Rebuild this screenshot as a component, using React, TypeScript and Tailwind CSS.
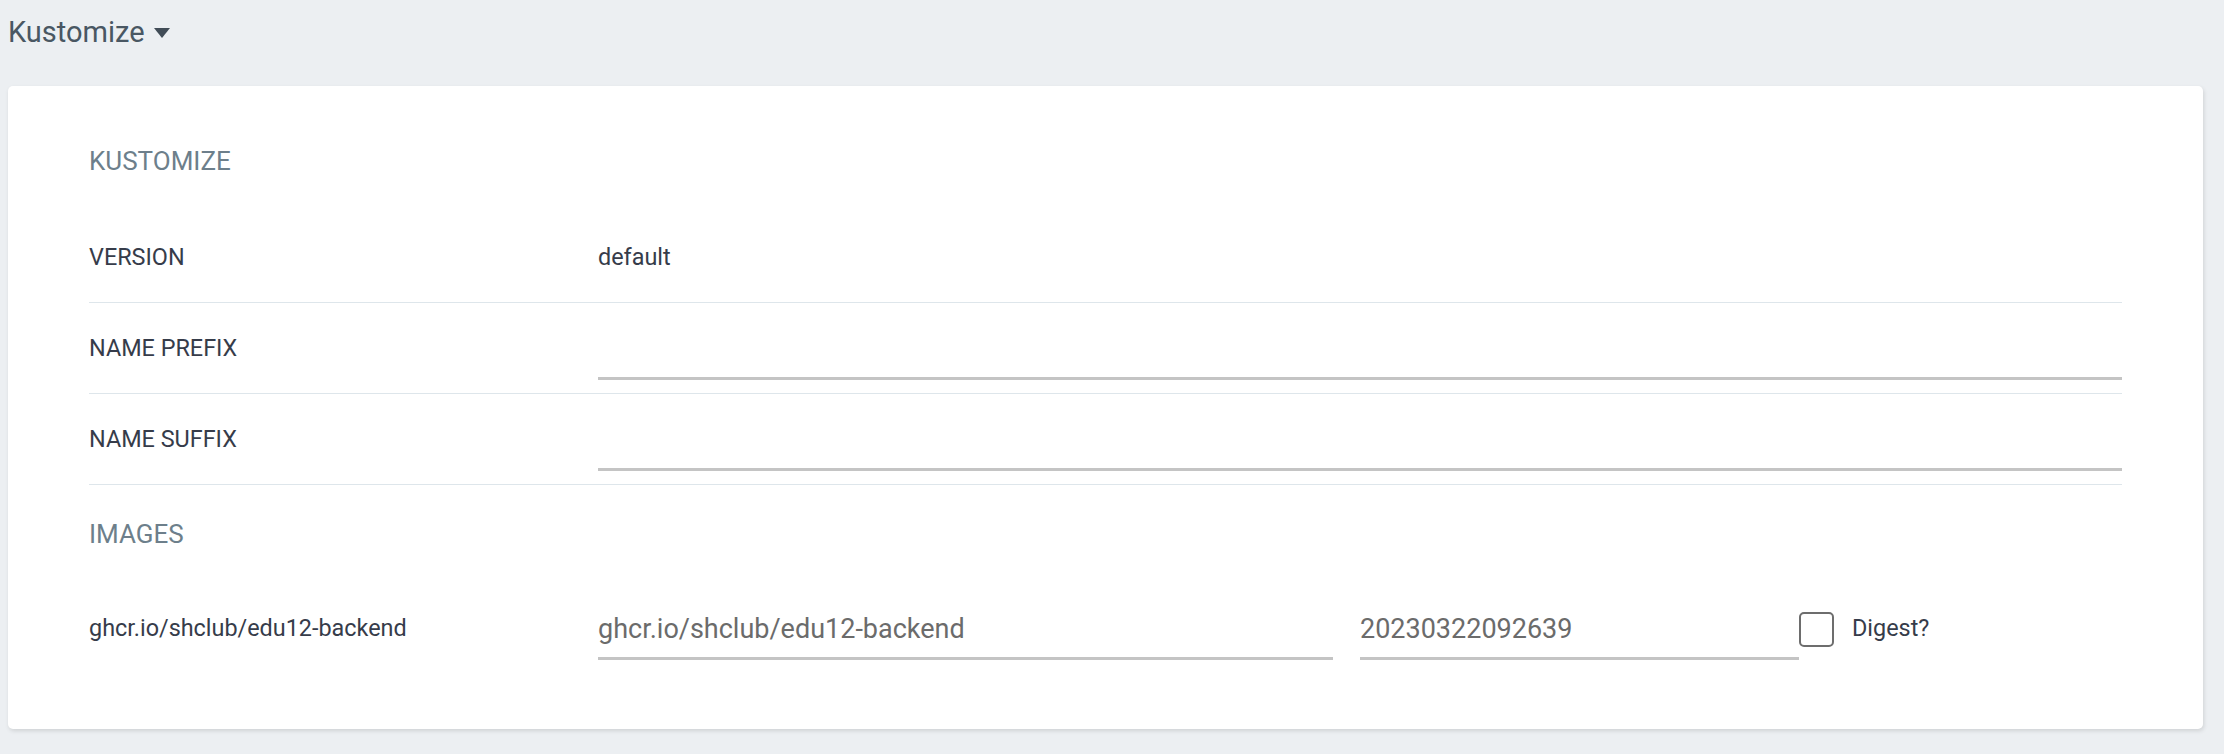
import React from "react";

const font = "font-['Roboto','Liberation_Sans',sans-serif]";

function Row({ label, children }: { label: string; children?: React.ReactNode }) {
  return (
    <div className="flex h-[91px] items-center border-b border-[#dee6eb]">
      <div className="w-[509px] shrink-0 pt-[2px] text-[23.4px] text-[#363c4a]">{label}</div>
      <div className="flex flex-1 items-center pt-[2px]">{children}</div>
    </div>
  );
}

function TextInput({ value, className }: { value?: string; className: string }) {
  return (
    <input
      readOnly
      value={value ?? ""}
      className={`h-[62px] border-0 border-b-[3px] border-[#c4c4c4] bg-transparent p-0 pt-[3px] text-[27px] text-[#6b6b6b] outline-none ${font} ${className}`}
    />
  );
}

export default function App() {
  return (
    <div className={`min-h-screen bg-[#eceff2] ${font}`}>
      <div className="flex items-center pl-[8px] pt-[15px]">
        <span className="text-[29px] leading-[34px] text-[#495763]">Kustomize</span>
        <svg width="16" height="10" viewBox="0 0 16 10" className="ml-[9px] mt-[1px]">
          <path d="M0 0 H16 L8 10 Z" fill="#414c57" />
        </svg>
      </div>
      <div className="ml-[8px] mr-[21px] mt-[37px] rounded-[5px] bg-white px-[81px] pb-[56px] pt-[60px] shadow-[1px_2px_4px_rgba(0,0,0,0.12)]">
        <div className="mb-[36px] text-[26px] leading-[30px] text-[#6d7f8b]">KUSTOMIZE</div>
        <Row label="VERSION">
          <span className="text-[23.4px] text-[#363c4a]">default</span>
        </Row>
        <Row label="NAME PREFIX">
          <TextInput className="w-full" />
        </Row>
        <Row label="NAME SUFFIX">
          <TextInput className="w-full" />
        </Row>
        <div className="mb-[34px] mt-[34px] text-[26px] leading-[30px] text-[#6d7f8b]">IMAGES</div>
        <div className="flex h-[90px] items-center pt-[2px]">
          <div className="w-[509px] shrink-0 text-[23.4px] text-[#363c4a]">ghcr.io/shclub/edu12-backend</div>
          <TextInput value="ghcr.io/shclub/edu12-backend" className="w-[735px] shrink-0" />
          <TextInput value="20230322092639" className="ml-[27px] w-[439px] shrink-0" />
          <div className="h-[35px] w-[35px] shrink-0 rounded-[5px] border-2 border-[#6d6d6d] bg-white" />
          <span className="ml-[18px] text-[23.4px] text-[#363c4a]">Digest?</span>
        </div>
      </div>
    </div>
  );
}
